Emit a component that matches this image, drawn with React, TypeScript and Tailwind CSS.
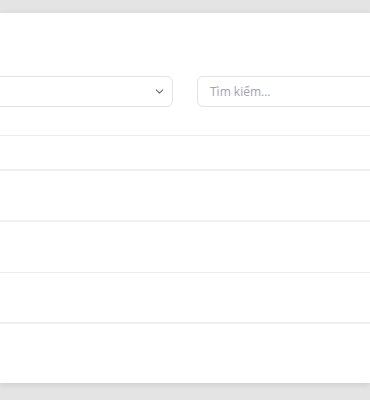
import { ChevronDown } from "lucide-react";

export default function App(): JSX.Element {
  return (
    <div className="h-[400px] overflow-hidden bg-[#e4e4e4] pt-3" style={{ fontFamily: '"Open Sans", Lato, sans-serif' }}>
      <div className="h-[371px] overflow-hidden bg-white shadow-[0_2px_6px_rgba(0,0,0,0.10)] border-t border-[#dedede]">
        {/* filters */}
        <div className="flex gap-6 pt-[63px]">
          <div className="-ml-3 flex h-[31px] w-[185px] shrink-0 items-center justify-end rounded-md border border-[#e2e2e8] pr-[6px]">
            <ChevronDown size={13} strokeWidth={2} className="text-[#6b6b75]" />
          </div>
          <div className="flex h-[31px] w-[220px] shrink-0 items-center rounded-md border border-[#e2e2e8] px-3">
            <span className="text-[12px] text-[#a3a3ad]">Tìm kiếm...</span>
          </div>
        </div>
        {/* table */}
        <div className="mt-[28px] border-t border-[#ececec]">
          <div className="h-[35px] border-b-2 border-[#efefef]"></div>
          <div className="h-[51px] border-b-2 border-[#f0f0f2]"></div>
          <div className="h-[51px] border-b border-[#ebebf0]"></div>
          <div className="h-[51px] border-b-2 border-[#efefef]"></div>
        </div>
      </div>
    </div>
  );
}
